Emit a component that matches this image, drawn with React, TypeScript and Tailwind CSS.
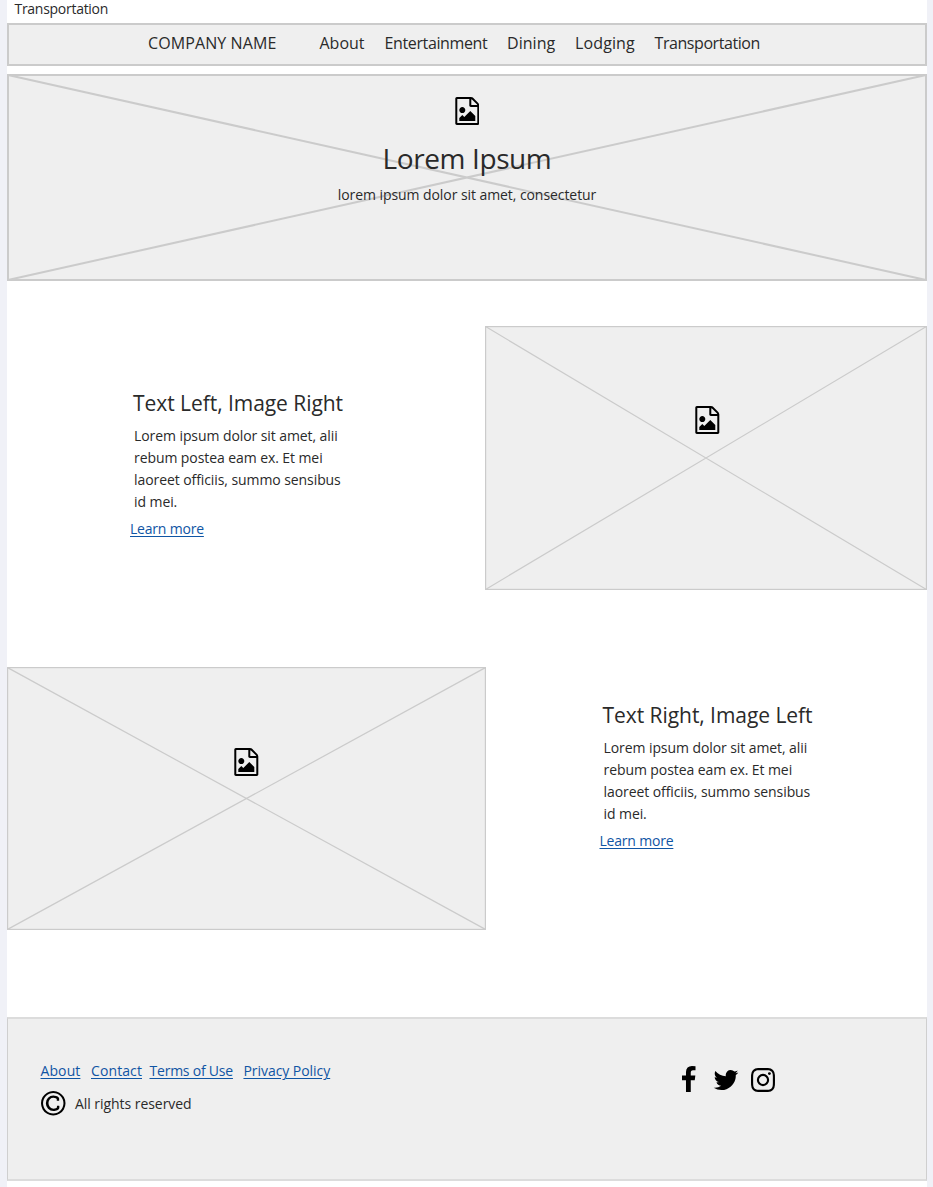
import { type ReactNode } from 'react';

const FILE_IMAGE =
  'M1468 380q28 28 48 76t20 88v1152q0 40-28 68t-68 28h-1344q-40 0-68-28t-28-68v-1600q0-40 28-68t68-28h896q40 0 88 20t76 48zM1024 136v376h376q-10-29-22-41l-313-313q-12-12-41-22zM1408 1664v-1024h-416q-40 0-68-28t-28-68v-416h-768v1536h1280zM1280 1216v320h-1024v-192l192-192 128 128 384-384zM448 1024q-80 0-136-56t-56-136 56-136 136-56 136 56 56 136-56 136-136 56z';
const FACEBOOK =
  'M959 12v264h-157q-86 0-116 36t-30 108v189h293l-39 296h-254v759h-306v-759h-255v-296h255v-218q0-186 104-288.500t277-102.500q147 0 228 12z';
const TWITTER =
  'M1620 408q-67 98-162 167 1 14 1 42 0 130-38 259.500t-115.500 248.500-184.500 210.500-258 146-323 54.500q-271 0-496-145 35 4 78 4 225 0 401-138-105-2-188-64.500t-114-159.500q33 5 61 5 43 0 85-11-112-23-185.500-111.500t-73.500-205.500v-4q68 38 146 41-66-44-105-115t-39-154q0-88 44-163 121 149 294.500 238.500t371.500 99.500q-8-38-8-74 0-134 94.500-228.500t228.500-94.500q140 0 236 102 109-21 205-78-37 115-142 178 93-10 186-50z';
const INSTAGRAM =
  'M1152 896q0-106-75-181t-181-75-181 75-75 181 75 181 181 75 181-75 75-181zm138 0q0 164-115 279t-279 115-279-115-115-279 115-279 279-115 279 115 115 279zm108-410q0 38-27 65t-65 27-65-27-27-65 27-65 65-27 65 27 27 65zm-502-220q-7 0-76.500-.5t-105.500 0-96.500 3-103 10-71.500 18.500q-50 20-88 58t-58 88q-11 29-18.500 71.500t-10 103-3 96.500 0 105.500 .5 76.500-.5 76.500 0 105.500 3 96.500 10 103 18.500 71.500q20 50 58 88t88 58q29 11 71.500 18.500t103 10 96.500 3 105.500 0 76.500-.5 76.500 .5 105.500 0 96.500-3 103-10 71.500-18.500q50-20 88-58t58-88q11-29 18.500-71.500t10-103 3-96.500 0-105.500-.5-76.500 .5-76.500 0-105.500-3-96.500-10-103-18.500-71.500q-20-50-58-88t-88-58q-29-11-71.500-18.500t-103-10-96.500-3-105.500 0-76.500 .5zm768 630q0 229-5 317-10 208-124 322t-322 124q-88 5-317 5t-317-5q-208-10-322-124t-124-322q-5-88-5-317t5-317q10-208 124-322t322-124q88-5 317-5t317 5q208 10 322 124t124 322q5 88 5 317z';
const COPYRIGHT =
  'M1150 946v109q0 50-36.500 89t-94 60.500-118 32.500-117.500 11q-205 0-342-139t-137-346q0-203 136-339t339-136q34 0 75.500 4.500t93 18 92.500 34 69 56.500 28 81v109q0 16-16 16h-118q-16 0-16-16v-70q0-43-65.500-67.500t-137.500-24.500q-140 0-228.500 91.500t-88.500 237.500q0 151 91.500 249.500t233.500 98.500q68 0 138-24t70-66v-70q0-7 4.500-11.500t10.500-4.500h119q6 0 11 4.500t5 11.500zm-382-818q-130 0-248.500 51t-204 136.500-136.500 204-51 248.500 51 248.500 136.500 204 204 136.500 248.500 51 248.500-51 204-136.500 136.500-204 51-248.500-51-248.500-136.500-204-204-136.500-248.500-51zm768 640q0 209-103 385.500t-279.500 279.500-385.500 103-385.500-103-279.500-279.500-103-385.500 103-385.500 279.500-279.500 385.500-103 385.500 103 279.500 279.500 103 385.500z';

function Icon({ path, viewBox, className }: { path: string; viewBox: string; className: string }) {
  return (
    <svg viewBox={viewBox} className={`shrink-0 fill-black ${className}`} aria-hidden="true">
      <path d={path} />
    </svg>
  );
}

function FileImageIcon() {
  return <Icon path={FILE_IMAGE} viewBox="0 0 1536 1792" className="h-7 w-[24.6px]" />;
}

/* Crossed box that stands in for a picture. */
function Placeholder({
  width,
  height,
  stroke,
  className,
  children,
}: {
  width: number;
  height: number;
  stroke: number;
  className: string;
  children: ReactNode;
}) {
  const h = stroke / 2;
  return (
    <div className={`relative shrink-0 ${className}`}>
      <svg
        viewBox={`0 0 ${width} ${height}`}
        className="absolute inset-0 size-full fill-[#efefef] stroke-[#cbcbcb]"
        strokeWidth={stroke}
        aria-hidden="true"
      >
        <rect x={h} y={h} width={width - stroke} height={height - stroke} />
        <path d={`M${h} ${h}L${width - h} ${height - h}M${width - h} ${h}L${h} ${height - h}`} />
      </svg>
      <div className="relative flex flex-col items-center">{children}</div>
    </div>
  );
}

const LINK = 'text-[#0f55a4] underline decoration-1 underline-offset-2';

function Article({ title, className }: { title: string; className: string }) {
  return (
    <article className={`w-[240px] shrink-0 ${className}`}>
      <h2 className="ml-[3px] text-[21px] leading-7 tracking-[-0.05px]">{title}</h2>
      <p className="mt-2 ml-1 leading-[22px] tracking-[-0.08px]">
        Lorem ipsum dolor sit amet, alii
        <br />
        rebum postea eam ex. Et mei
        <br />
        laoreet officiis, summo sensibus
        <br />
        id mei.
      </p>
      <a href="#more" className={`mt-[5px] block w-fit leading-[22px] tracking-[-0.2px] ${LINK}`}>
        Learn more
      </a>
    </article>
  );
}

export default function App() {
  return (
    <div className="h-[1187px] w-[933px] overflow-hidden bg-[#f0f1f7] pl-[7px] font-['Open_Sans',sans-serif] text-[14px] whitespace-nowrap text-[#2a2a2a]">
      <div className="h-full w-[920px] bg-white">
        <div className="h-[23px] pl-[7.5px] leading-[17px] tracking-[-0.28px]">Transportation</div>

        <nav className="flex h-[43px] border-2 border-[#cbcbcb] bg-[#efefef] pl-[139px] text-[16px] leading-9">
          <span className="w-[171.5px] tracking-[0.1px]">COMPANY NAME</span>
          <span className="w-[65px]">About</span>
          <span className="w-[122.5px] tracking-[-0.37px]">Entertainment</span>
          <span className="w-[68px] tracking-[0.05px]">Dining</span>
          <span className="w-[79.5px] tracking-[0.12px]">Lodging</span>
          <span className="tracking-[-0.43px]">Transportation</span>
        </nav>

        <Placeholder width={920} height={207} stroke={2} className="mt-[7.5px] h-[207px] w-[920px]">
          <div className="flex flex-col items-center pt-[23.5px]">
            <FileImageIcon />
            <h1 className="mt-[12.5px] text-[28px] leading-10 tracking-[-0.4px]">Lorem Ipsum</h1>
            <p className="mt-[6.5px] leading-[22px] tracking-[-0.07px]">lorem ipsum dolor sit amet, consectetur</p>
          </div>
        </Placeholder>

        <section className="mt-[45.5px] flex">
          <Article title="Text Left, Image Right" className="mt-[63px] mr-[115px] ml-[123px]" />
          <Placeholder width={442} height={264} stroke={1.2} className="h-[264px] w-[442px]">
            <div className="pt-20 pl-[3px]">
              <FileImageIcon />
            </div>
          </Placeholder>
        </section>

        <section className="mt-[77px] flex">
          <Placeholder width={479} height={263} stroke={1.2} className="h-[263px] w-[479px]">
            <div className="pt-[81px]">
              <FileImageIcon />
            </div>
          </Placeholder>
          <Article title="Text Right, Image Left" className="mt-[34px] ml-[113.5px]" />
        </section>

        <footer className="mt-[87px] flex h-[164px] justify-between border-x border-y-2 border-x-[#cfcfcf] border-y-[#dcdcdc] bg-[#efefef] pl-8">
          <div className="pt-[41px]">
            <div className="flex leading-[22px]">
              <a href="#about" className={`mr-[10.5px] ml-[0.5px] w-10 tracking-[0.1px] ${LINK}`}>About</a>
              <a href="#contact" className={`mr-[7.5px] tracking-[0.1px] ${LINK}`}>Contact</a>
              <a href="#terms" className={`mr-[10.5px] tracking-[-0.22px] ${LINK}`}>Terms of Use</a>
              <a href="#privacy" className={`tracking-[-0.05px] ${LINK}`}>Privacy Policy</a>
            </div>
            <div className="mt-[9px] flex items-center leading-[22px]">
              <Icon path={COPYRIGHT} viewBox="0 0 1536 1536" className="mr-[9.5px] ml-px size-[24.5px]" />
              <span className="pt-0.5 tracking-[-0.05px]">All rights reserved</span>
            </div>
          </div>
          <div className="flex pt-[47px] pr-[151px]">
            <Icon path={FACEBOOK} viewBox="95 0 864 1664" className="h-[26px] w-[13.5px]" />
            <Icon path={TWITTER} viewBox="0 0 1792 1792" className="ml-[17.5px] size-7" />
            <Icon path={INSTAGRAM} viewBox="128 128 1536 1536" className="mt-0.5 ml-2.5 size-6" />
          </div>
        </footer>
      </div>
    </div>
  );
}
